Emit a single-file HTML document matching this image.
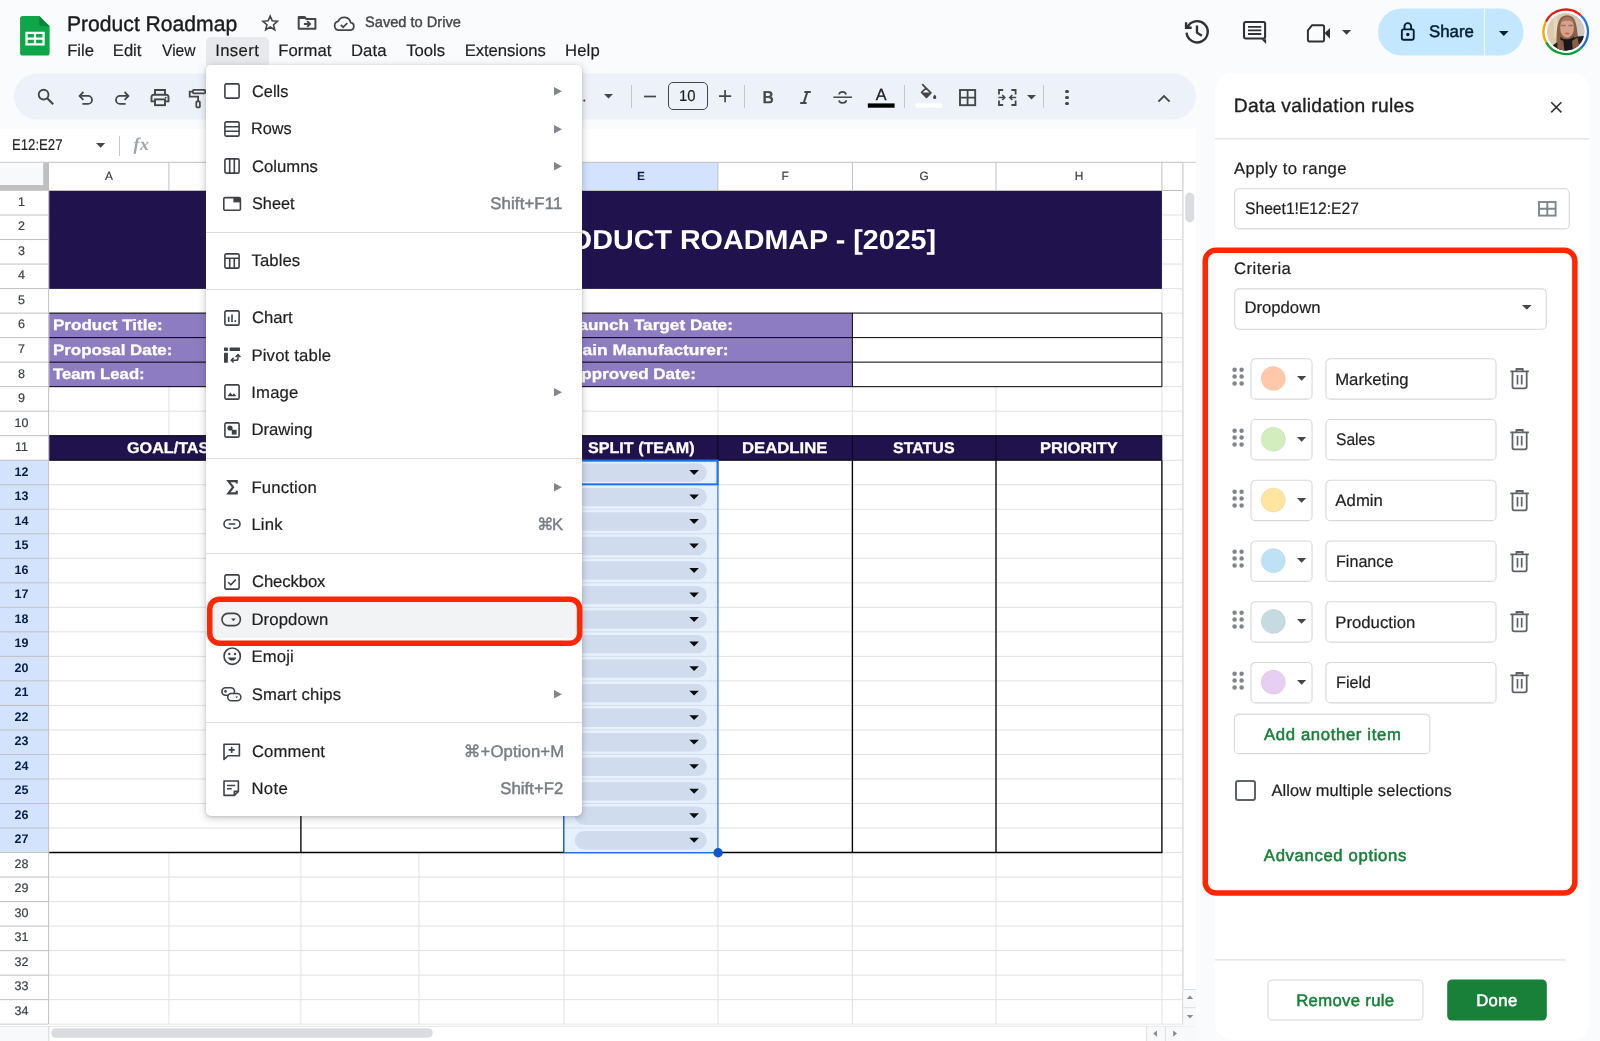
<!DOCTYPE html>
<html lang="en">
<head>
<meta charset="utf-8">
<title>Product Roadmap - Google Sheets</title>
<style>
*{margin:0;padding:0;box-sizing:content-box}
html,body{width:1600px;height:1041px;overflow:hidden;background:#f9fbfd}
body{position:relative;font-family:"Liberation Sans",sans-serif;text-rendering:geometricPrecision}
#app{position:absolute;left:0;top:0;width:1600px;height:1041px;overflow:hidden;will-change:transform}
#app div,#app span,#app svg{position:absolute;display:block}
#app svg{overflow:visible}
#app span{white-space:nowrap}
.ch{font-size:11.9px;line-height:14px;text-align:center;color:#3c4043;-webkit-text-stroke:.2px #3c4043}
.ch.sel{font-weight:700;color:#041e49;-webkit-text-stroke:0}
.rh{left:0;width:43px;font-size:12.5px;line-height:14px;text-align:center;color:#3c4043;-webkit-text-stroke:.2px #3c4043}
.rh.sel{font-weight:700;color:#041e49;-webkit-text-stroke:0}
</style>
</head>
<body>
<div id="app">
<!-- top bar -->
<svg style="left:20.3px;top:15.8px;" width="29.7" height="39.9" viewBox="0 0 30 40.5"><path d="M2.6 0H19.5L30 10.5V37.6a2.6 2.6 0 0 1-2.6 2.6H2.6A2.6 2.6 0 0 1 0 37.6V2.6A2.6 2.6 0 0 1 2.6 0Z" fill="#0da648"/><path d="M19.5 0L30 10.5H22.1a2.6 2.6 0 0 1-2.6-2.6Z" fill="#08863a"/><path d="M5.4 15.8H25v14H5.4Zm2.3 2.4v3.5h6.3v-3.5Zm8.6 0v3.5h6.4v-3.5Zm-8.6 5.8v3.4h6.3V24Zm8.6 0v3.4h6.4V24Z" fill="#fff" fill-rule="evenodd" transform="translate(0 .2)"/></svg>
<span style="left:66.77px;top:12px;font-size:21.3px;line-height:24px;color:#1b1b1b;transform-origin:0 0;transform:scaleX(0.9912);-webkit-text-stroke:0.4px #1b1b1b;">Product Roadmap</span>
<svg style="left:259.75px;top:12.5px;" width="20.4" height="20.4" viewBox="0 0 24 24"><path d="M12 3.6l2.4 5.6 6.1.55-4.6 4 1.4 5.95L12 16.5 6.7 19.7l1.4-5.95-4.6-4 6.1-.55Z" fill="none" stroke="#444746" stroke-width="1.9" stroke-linejoin="miter"/></svg>
<svg style="left:297px;top:15px;" width="20" height="15" viewBox="0 0 20 15"><path d="M1.7 13.7V1.9H7.5L9.3 4H18.4V13.7Z" fill="none" stroke="#444746" stroke-width="2" stroke-linejoin="round"/><path d="M1.7 1.9H7.5L9.3 4H1.7Z" fill="#444746"/><path d="M6.9 9h5.4M10.2 6.1l2.9 2.9-2.9 2.9" fill="none" stroke="#444746" stroke-width="1.9"/></svg>
<svg style="left:333.1px;top:12.7px;" width="22.2" height="20.3" viewBox="0 0 24 22"><path d="M6.5 18.6h12a4.1 4.1 0 0 0 .6-8.15A7.1 7.1 0 0 0 5.6 9.1a4.8 4.8 0 0 0 .9 9.5Z" fill="none" stroke="#444746" stroke-width="1.9" stroke-linejoin="round"/><path d="M8.4 12.9l2.5 2.5 4.6-4.6" fill="none" stroke="#444746" stroke-width="1.8"/></svg>
<span style="left:364.54px;top:14px;font-size:15px;line-height:17px;color:#444746;transform-origin:0 0;transform:scaleX(0.9744);-webkit-text-stroke:0.4px #444746;">Saved to Drive</span>
<div style="left:206px;top:36.5px;width:63px;height:28.5px;background:#e7e9ec;border-radius:5px 5px 0 0;"></div>
<span style="left:67.23px;top:41px;font-size:16.7px;line-height:19px;color:#1f1f1f;letter-spacing:-0.05px;-webkit-text-stroke:0.2px #1f1f1f;">File</span>
<span style="left:112.83px;top:41px;font-size:16.7px;line-height:19px;color:#1f1f1f;letter-spacing:-0.08px;-webkit-text-stroke:0.2px #1f1f1f;">Edit</span>
<span style="left:161.93px;top:41px;font-size:16.7px;line-height:19px;color:#1f1f1f;transform-origin:0 0;transform:scaleX(0.9360);-webkit-text-stroke:0.2px #1f1f1f;">View</span>
<span style="left:215.16px;top:41px;font-size:16.7px;line-height:19px;color:#1f1f1f;letter-spacing:0.39px;-webkit-text-stroke:0.2px #1f1f1f;">Insert</span>
<span style="left:278.33px;top:41px;font-size:16.7px;line-height:19px;color:#1f1f1f;letter-spacing:0.03px;-webkit-text-stroke:0.2px #1f1f1f;">Format</span>
<span style="left:350.93px;top:41px;font-size:16.7px;line-height:19px;color:#1f1f1f;letter-spacing:0.08px;-webkit-text-stroke:0.2px #1f1f1f;">Data</span>
<span style="left:406.22px;top:41px;font-size:16.7px;line-height:19px;color:#1f1f1f;letter-spacing:-0.05px;-webkit-text-stroke:0.2px #1f1f1f;">Tools</span>
<span style="left:464.63px;top:41px;font-size:16.7px;line-height:19px;color:#1f1f1f;letter-spacing:-0.05px;-webkit-text-stroke:0.2px #1f1f1f;">Extensions</span>
<span style="left:564.93px;top:41px;font-size:16.7px;line-height:19px;color:#1f1f1f;letter-spacing:0.16px;-webkit-text-stroke:0.2px #1f1f1f;">Help</span>
<svg style="left:1181.9px;top:17.9px;" width="28" height="28" viewBox="0 0 24 24"><path d="M4.6 8.2A9.1 9.1 0 1 1 3.9 12.6" fill="none" stroke="#303133" stroke-width="2.05"/><path d="M3.5 3.6V8.4H8.3" fill="none" stroke="#303133" stroke-width="2.05"/><path d="M12.85 6.5V12.6L17 15.3" fill="none" stroke="#303133" stroke-width="2.05"/></svg>
<svg style="left:1242px;top:20px;" width="26" height="25" viewBox="0 0 26 25"><rect x="2" y="2" width="21.1" height="16.5" rx="1.7" fill="none" stroke="#303133" stroke-width="2.1"/><path d="M19.4 19.2H24.15V23.9Z" fill="#303133"/><path d="M6 6.8H19.3M6 10.4H19.3M6 14H19.3" stroke="#303133" stroke-width="1.8"/></svg>
<svg style="left:1306px;top:22.9px;" width="25" height="20.6" viewBox="0 0 25 21"><path d="M6 2.2H16.6a1.6 1.6 0 0 1 1.6 1.6V17.2a1.6 1.6 0 0 1-1.6 1.6H3.3a1.6 1.6 0 0 1-1.6-1.6V7.5Z" fill="none" stroke="#303133" stroke-width="2" stroke-linejoin="round"/><path d="M18.6 10.5L24.2 5V16Z" fill="#303133"/></svg>
<svg style="left:1341.8px;top:29.75px;" width="9.2" height="4.7" viewBox="0 0 9.2 4.7"><path d="M0 0H9.2L4.6 4.7Z" fill="#3c4043"/></svg>
<svg style="left:1376px;top:6px;" width="151" height="53"><rect x="2" y="2.5" width="145.5" height="47" rx="23.5" fill="#c2e7ff"/></svg>
<div style="left:1483.6px;top:8.5px;width:1.4px;height:47px;background:#f9fbfd;"></div>
<svg style="left:1400.1px;top:20.7px;" width="15.6" height="20" viewBox="0 0 16 20.5"><rect x="1.9" y="8.6" width="12.2" height="10.6" rx="1.6" fill="none" stroke="#001d35" stroke-width="1.9"/><path d="M4.6 8.4V5.6a3.4 3.4 0 0 1 6.8 0V8.4" fill="none" stroke="#001d35" stroke-width="1.9"/><circle cx="8" cy="13.9" r="1.75" fill="#001d35"/></svg>
<span style="left:1428.94px;top:22px;font-size:16.8px;line-height:19px;color:#001d35;letter-spacing:0.03px;-webkit-text-stroke:0.5px #001d35;">Share</span>
<svg style="left:1498.8px;top:31px;" width="9.6" height="5" viewBox="0 0 9.6 5"><path d="M0 0H9.6L4.8 5Z" fill="#001d35"/></svg>
<svg style="left:1541px;top:7.25px;" width="50" height="50" viewBox="0 0 50 50"><defs><clipPath id="avc"><circle cx="24.75" cy="24.8" r="18.75"/></clipPath></defs><g fill="none" stroke-width="2.3"><path d="M4.93 14.7A22.25 22.25 0 0 1 39.64 8.27" stroke="#ea1c12"/><path d="M39.64 8.27A22.25 22.25 0 0 1 39.64 41.33" stroke="#1a6dea"/><path d="M39.64 41.33A22.25 22.25 0 0 1 5.2 35.42" stroke="#0f9d3a"/><path d="M5.2 35.42A22.25 22.25 0 0 1 4.93 14.7" stroke="#f6a800"/></g><circle cx="24.75" cy="24.8" r="20.6" fill="#fff"/><g clip-path="url(#avc)"><g transform="translate(5.85 5.9)"><rect width="38" height="38" fill="#dbcab0"/><rect x="25" y="0" width="13" height="26" fill="#cfc8c1"/><rect x="7" y="3" width="3.4" height="22" fill="#e6d7bd"/><path d="M10.2 38C9.2 24 9.4 10 13.8 5 17 1.3 23.6 1.3 26.6 5 30.6 10 30.2 21 33 38Z" fill="#8b5f45"/><path d="M4.5 33.5C8 30 12.5 28 16 27L26 25.5C29.5 23.8 33.5 23 37 23.2L38 38H4.5Z" fill="#222224"/><ellipse cx="20.2" cy="14.9" rx="6.9" ry="9.9" fill="#d7a28c"/><path d="M13.6 9.5C15 5.6 18 4 20.4 4 23 4 25.8 5.6 27 9.4 24.5 7.3 16.4 7.3 13.6 9.5Z" fill="#a9775c"/><path d="M14.2 12.6h4.6M21.6 12.6h4.6" stroke="#9b6f62" stroke-width="1.5"/><ellipse cx="20.3" cy="20.6" rx="2.7" ry="1" fill="#c0695f"/><path d="M13.6 23.6C15.4 27.6 25 27.6 27 23.2L27.6 38H13Z" fill="#18181b"/><path d="M10.4 25L16.4 28.2 17.6 38H10.6ZM25.2 28L30.6 24.6 33.2 36.6 26 38Z" fill="#8b5f45"/></g></g></svg>
<!-- toolbar -->
<svg style="left:12px;top:71px;" width="1188" height="52"><rect x="2" y="2.4" width="1182" height="46" rx="23" fill="#edf2fa"/></svg>
<svg style="left:36.5px;top:87.8px;" width="18" height="17.5" viewBox="0 0 18 17.5"><circle cx="6.6" cy="6.6" r="4.9" fill="none" stroke="#444746" stroke-width="1.9"/><path d="M10.2 10.2l6 6" stroke="#444746" stroke-width="2.1"/></svg>
<svg style="left:77.5px;top:91px;" width="16" height="14" viewBox="0 0 16 14"><path d="M1.6 4.9H10a4 4 0 0 1 0 8H4.4" fill="none" stroke="#444746" stroke-width="1.8"/><path d="M5.4 1L1.6 4.9l3.8 3.9" fill="none" stroke="#444746" stroke-width="1.8"/></svg>
<svg style="left:114.3px;top:91px;" width="16" height="14" viewBox="0 0 16 14"><path d="M14.4 4.9H6a4 4 0 0 0 0 8h5.6" fill="none" stroke="#444746" stroke-width="1.8"/><path d="M10.6 1l3.8 3.9-3.8 3.9" fill="none" stroke="#444746" stroke-width="1.8"/></svg>
<svg style="left:150.2px;top:88.6px;" width="20" height="17.2" viewBox="0 0 20 17.2"><path d="M5 5.6V1h10v4.6" fill="none" stroke="#444746" stroke-width="1.9"/><path d="M4.6 12.4H1.5V7.9a2.2 2.2 0 0 1 2.2-2.2h12.6a2.2 2.2 0 0 1 2.2 2.2v4.5h-3.1" fill="none" stroke="#444746" stroke-width="1.9"/><rect x="5" y="10.4" width="10" height="5.8" fill="none" stroke="#444746" stroke-width="1.9"/><circle cx="15.7" cy="8.6" r="0.95" fill="#444746"/></svg>
<svg style="left:187.6px;top:87.6px;" width="19" height="21" viewBox="0 0 19 21"><rect x="4.9" y="1.9" width="12.3" height="3.5" rx="0.9" fill="none" stroke="#444746" stroke-width="1.8"/><path d="M4.9 3.6H1.7V8.7H10.1V13" fill="none" stroke="#444746" stroke-width="1.8"/><rect x="8.3" y="13.4" width="3.6" height="6" rx="0.8" fill="none" stroke="#444746" stroke-width="1.7"/></svg>
<svg style="left:582px;top:98px;" width="5" height="5" viewBox="0 0 5 5"><circle cx="2.3" cy="2.6" r="1.15" fill="#444746"/></svg>
<svg style="left:604px;top:94.1px;" width="9" height="4.6" viewBox="0 0 9 4.6"><path d="M0 0H9L4.5 4.6Z" fill="#444746"/></svg>
<div style="left:630.9px;top:84.6px;width:1px;height:23px;background:#c7c7c7;"></div>
<div style="left:744.1px;top:84.6px;width:1px;height:23px;background:#c7c7c7;"></div>
<div style="left:904.1px;top:84.6px;width:1px;height:23px;background:#c7c7c7;"></div>
<div style="left:1043.1px;top:84.6px;width:1px;height:23px;background:#c7c7c7;"></div>
<svg style="left:643px;top:94px;" width="14" height="5" viewBox="0 0 14 5"><path d="M1 2.5H13" stroke="#444746" stroke-width="1.7"/></svg>
<div style="left:668.4px;top:82.4px;width:39.2px;height:27.2px;border:1px solid #444746;border-radius:5px;box-sizing:border-box;"></div>
<span style="left:679.47px;top:88px;font-size:15.6px;line-height:17px;color:#1f1f1f;transform-origin:0 0;transform:scaleX(0.9547);-webkit-text-stroke:0.2px #1f1f1f;">10</span>
<svg style="left:718px;top:89.4px;" width="14.2" height="14.2" viewBox="0 0 14.2 14.2"><path d="M1 7.1H13.2M7.1 1V13.2" stroke="#444746" stroke-width="1.7"/></svg>
<span style="left:762.62px;top:88px;font-size:16.8px;line-height:19px;color:#444746;-webkit-text-stroke:0.7px #444746;">B</span>
<svg style="left:798.6px;top:90.6px;" width="13" height="13" viewBox="0 0 13 13"><path d="M5.4 1.1h6.4M1.2 11.9h6.4M8.3 1.1L4.7 11.9" stroke="#444746" stroke-width="2"/></svg>
<svg style="left:832.6px;top:89.6px;" width="19.4" height="15" viewBox="0 0 19.4 15"><path d="M0.4 7.2h18.6" stroke="#444746" stroke-width="1.5"/><path d="M13.1 4.4C12.6 2.7 11.3 1.9 9.6 1.9 7.7 1.9 6.2 2.9 6.2 4.5M6 10.4c.5 1.7 1.9 2.5 3.7 2.5 2 0 3.5-1 3.5-2.6" fill="none" stroke="#444746" stroke-width="1.8"/></svg>
<span style="left:875.87px;top:86px;font-size:16.2px;line-height:18px;color:#1f1f1f;-webkit-text-stroke:0.3px #1f1f1f;">A</span>
<svg style="left:865px;top:101px;" width="32" height="10"><rect x="2.8" y="2.4" width="26.8" height="4.3" rx="0" fill="#000"/></svg>
<svg style="left:919.6px;top:84.2px;" width="17.4" height="16.4" viewBox="0 0 17.4 16.4"><path d="M2.6 0.6L10.9 8.9 6.5 13.3 1.6 8.4 6 4Z" fill="none" stroke="#444746" stroke-width="1.7" stroke-linejoin="round"/><path d="M1.9 8.6H10.7L6.4 12.9Z" fill="#444746"/><path d="M14.7 10.6c.9 1.2 1.6 2.1 1.6 2.9a1.6 1.6 0 0 1-3.2 0c0-.8.7-1.7 1.6-2.9Z" fill="#444746"/></svg>
<svg style="left:913px;top:101px;" width="32" height="10"><rect x="2.4" y="2.3" width="26.8" height="4.4" rx="0" fill="#fff"/></svg>
<svg style="left:959.4px;top:88.8px;" width="17.2" height="17.2" viewBox="0 0 17.2 17.2"><rect x="1" y="1" width="15.2" height="15.2" fill="none" stroke="#444746" stroke-width="1.9"/><path d="M8.6 1v15.2M1 8.6h15.2" stroke="#444746" stroke-width="1.8"/></svg>
<svg style="left:997.8px;top:88.6px;" width="18.6" height="17" viewBox="0 0 18.6 17"><path d="M5.2 1H1V5.4M13.4 1h4.2V5.4M5.2 16H1V11.6M13.4 16h4.2V11.6" fill="none" stroke="#444746" stroke-width="1.8"/><path d="M0.4 8.5H6.6M4.3 6l2.5 2.5L4.3 11M18.2 8.5H12M14.3 6l-2.5 2.5 2.5 2.5" fill="none" stroke="#444746" stroke-width="1.6"/></svg>
<svg style="left:1026.9px;top:94.7px;" width="9" height="4.6" viewBox="0 0 9 4.6"><path d="M0 0H9L4.5 4.6Z" fill="#444746"/></svg>
<div style="left:1065.4px;top:90.3px;width:3.2px;height:3.2px;background:#444746;border-radius:50%;"></div>
<div style="left:1065.4px;top:95.9px;width:3.2px;height:3.2px;background:#444746;border-radius:50%;"></div>
<div style="left:1065.4px;top:101.5px;width:3.2px;height:3.2px;background:#444746;border-radius:50%;"></div>
<svg style="left:1157px;top:93.6px;" width="14" height="9" viewBox="0 0 14 9"><path d="M1.4 7.6L7 2l5.6 5.6" fill="none" stroke="#444746" stroke-width="1.9"/></svg>
<!-- formula bar -->
<div style="left:0px;top:128.8px;width:1196px;height:34px;background:#fff;"></div>
<span style="left:11.92px;top:137px;font-size:15.6px;line-height:17px;color:#1f1f1f;transform-origin:0 0;transform:scaleX(0.8437);-webkit-text-stroke:0.2px #1f1f1f;">E12:E27</span>
<svg style="left:95.8px;top:142.8px;" width="9.2" height="4.8" viewBox="0 0 9.2 4.8"><path d="M0 0H9.2L4.6 4.8Z" fill="#444746"/></svg>
<div style="left:119.2px;top:136.4px;width:1px;height:19.2px;background:#c7c7c7;"></div>
<span style="left:133.4px;top:134px;font-family:'Liberation Serif',serif;font-style:italic;font-weight:700;font-size:17.8px;line-height:20px;color:#a0a4a8;letter-spacing:0.6px;">fx</span>
<!-- sheet grid -->
<svg style="left:0;top:0" width="1196" height="1041" viewBox="0 0 1196 1041"><rect x="0" y="162" width="1196" height="879" fill="#fff"/><path d="M49.2 215.02H1182.9" stroke="#e1e1e1" stroke-width="1"/><path d="M49.2 239.54H1182.9" stroke="#e1e1e1" stroke-width="1"/><path d="M49.2 264.06H1182.9" stroke="#e1e1e1" stroke-width="1"/><path d="M49.2 288.58H1182.9" stroke="#e1e1e1" stroke-width="1"/><path d="M49.2 313.1H1182.9" stroke="#e1e1e1" stroke-width="1"/><path d="M49.2 337.62H1182.9" stroke="#e1e1e1" stroke-width="1"/><path d="M49.2 362.14H1182.9" stroke="#e1e1e1" stroke-width="1"/><path d="M49.2 386.66H1182.9" stroke="#e1e1e1" stroke-width="1"/><path d="M49.2 411.18H1182.9" stroke="#e1e1e1" stroke-width="1"/><path d="M49.2 435.7H1182.9" stroke="#e1e1e1" stroke-width="1"/><path d="M49.2 460.22H1182.9" stroke="#e1e1e1" stroke-width="1"/><path d="M49.2 484.74H1182.9" stroke="#e1e1e1" stroke-width="1"/><path d="M49.2 509.26H1182.9" stroke="#e1e1e1" stroke-width="1"/><path d="M49.2 533.78H1182.9" stroke="#e1e1e1" stroke-width="1"/><path d="M49.2 558.3H1182.9" stroke="#e1e1e1" stroke-width="1"/><path d="M49.2 582.82H1182.9" stroke="#e1e1e1" stroke-width="1"/><path d="M49.2 607.34H1182.9" stroke="#e1e1e1" stroke-width="1"/><path d="M49.2 631.86H1182.9" stroke="#e1e1e1" stroke-width="1"/><path d="M49.2 656.38H1182.9" stroke="#e1e1e1" stroke-width="1"/><path d="M49.2 680.9H1182.9" stroke="#e1e1e1" stroke-width="1"/><path d="M49.2 705.42H1182.9" stroke="#e1e1e1" stroke-width="1"/><path d="M49.2 729.94H1182.9" stroke="#e1e1e1" stroke-width="1"/><path d="M49.2 754.46H1182.9" stroke="#e1e1e1" stroke-width="1"/><path d="M49.2 778.98H1182.9" stroke="#e1e1e1" stroke-width="1"/><path d="M49.2 803.5H1182.9" stroke="#e1e1e1" stroke-width="1"/><path d="M49.2 828.02H1182.9" stroke="#e1e1e1" stroke-width="1"/><path d="M49.2 852.54H1182.9" stroke="#e1e1e1" stroke-width="1"/><path d="M49.2 877.06H1182.9" stroke="#e1e1e1" stroke-width="1"/><path d="M49.2 901.58H1182.9" stroke="#e1e1e1" stroke-width="1"/><path d="M49.2 926.1H1182.9" stroke="#e1e1e1" stroke-width="1"/><path d="M49.2 950.62H1182.9" stroke="#e1e1e1" stroke-width="1"/><path d="M49.2 975.14H1182.9" stroke="#e1e1e1" stroke-width="1"/><path d="M49.2 999.66H1182.9" stroke="#e1e1e1" stroke-width="1"/><path d="M49.2 1024.18H1182.9" stroke="#e1e1e1" stroke-width="1"/><path d="M168.9 386.66V435.7" stroke="#e1e1e1" stroke-width="1"/><path d="M168.9 852.54V1024.18" stroke="#e1e1e1" stroke-width="1"/><path d="M300.9 386.66V435.7" stroke="#e1e1e1" stroke-width="1"/><path d="M300.9 852.54V1024.18" stroke="#e1e1e1" stroke-width="1"/><path d="M419 386.66V435.7" stroke="#e1e1e1" stroke-width="1"/><path d="M419 852.54V1024.18" stroke="#e1e1e1" stroke-width="1"/><path d="M564 386.66V435.7" stroke="#e1e1e1" stroke-width="1"/><path d="M564 852.54V1024.18" stroke="#e1e1e1" stroke-width="1"/><path d="M717.9 386.66V435.7" stroke="#e1e1e1" stroke-width="1"/><path d="M717.9 852.54V1024.18" stroke="#e1e1e1" stroke-width="1"/><path d="M852.4 386.66V435.7" stroke="#e1e1e1" stroke-width="1"/><path d="M852.4 852.54V1024.18" stroke="#e1e1e1" stroke-width="1"/><path d="M996 386.66V435.7" stroke="#e1e1e1" stroke-width="1"/><path d="M996 852.54V1024.18" stroke="#e1e1e1" stroke-width="1"/><path d="M1161.9 386.66V435.7" stroke="#e1e1e1" stroke-width="1"/><path d="M1161.9 852.54V1024.18" stroke="#e1e1e1" stroke-width="1"/><path d="M717.9 460.22V852.54" stroke="#e1e1e1" stroke-width="1"/><path d="M1161.9 288.58V313.1" stroke="#e1e1e1" stroke-width="1"/><path d="M1182.9 190.5V1024.18" stroke="#e1e1e1" stroke-width="1"/><path d="M1161.9 190.5V288.58" stroke="#e1e1e1" stroke-width="1"/><rect x="49.2" y="190.5" width="1112.7" height="98.38" fill="#20124d"/><rect x="49.2" y="313.1" width="803.2" height="73.56" fill="#8e7cc3"/><rect x="852.4" y="313.1" width="309.5" height="73.56" fill="#fff"/><rect x="49.2" y="435.7" width="1112.7" height="24.52" fill="#20124d"/><path d="M49.2 313.1H1161.9" stroke="#000" stroke-width="1"/><path d="M49.2 337.62H1161.9" stroke="#000" stroke-width="1"/><path d="M49.2 362.14H1161.9" stroke="#000" stroke-width="1"/><path d="M49.2 386.66H1161.9" stroke="#000" stroke-width="1"/><path d="M852.4 313.1V386.66" stroke="#000" stroke-width="1"/><path d="M1161.9 313.1V386.66" stroke="#000" stroke-width="1"/><path d="M49.2 435.7H1161.9" stroke="#000" stroke-width="1"/><path d="M49.2 460.22H1161.9" stroke="#000" stroke-width="1"/><path d="M300.9 435.7V460.22" stroke="#000" stroke-width="1" opacity=".75"/><path d="M564 435.7V460.22" stroke="#000" stroke-width="1" opacity=".75"/><path d="M717.9 435.7V460.22" stroke="#000" stroke-width="1" opacity=".75"/><path d="M852.4 435.7V460.22" stroke="#000" stroke-width="1" opacity=".75"/><path d="M996 435.7V460.22" stroke="#000" stroke-width="1" opacity=".75"/><path d="M1161.9 435.7V460.22" stroke="#000" stroke-width="1" opacity=".75"/><path d="M300.9 460.22V852.54" stroke="#000" stroke-width="1.35"/><path d="M564 460.22V852.54" stroke="#000" stroke-width="1.35"/><path d="M852.4 460.22V852.54" stroke="#000" stroke-width="1.35"/><path d="M996 460.22V852.54" stroke="#000" stroke-width="1.35"/><path d="M1161.9 460.22V852.54" stroke="#000" stroke-width="1.35"/><path d="M49.2 852.54H1162.4" stroke="#000" stroke-width="1.35"/><rect x="564" y="460.22" width="153.9" height="392.32" fill="#e7f0fd"/><path d="M564 484.74H717.9" stroke="#d3dcec" stroke-width="1"/><path d="M564 509.26H717.9" stroke="#d3dcec" stroke-width="1"/><path d="M564 533.78H717.9" stroke="#d3dcec" stroke-width="1"/><path d="M564 558.3H717.9" stroke="#d3dcec" stroke-width="1"/><path d="M564 582.82H717.9" stroke="#d3dcec" stroke-width="1"/><path d="M564 607.34H717.9" stroke="#d3dcec" stroke-width="1"/><path d="M564 631.86H717.9" stroke="#d3dcec" stroke-width="1"/><path d="M564 656.38H717.9" stroke="#d3dcec" stroke-width="1"/><path d="M564 680.9H717.9" stroke="#d3dcec" stroke-width="1"/><path d="M564 705.42H717.9" stroke="#d3dcec" stroke-width="1"/><path d="M564 729.94H717.9" stroke="#d3dcec" stroke-width="1"/><path d="M564 754.46H717.9" stroke="#d3dcec" stroke-width="1"/><path d="M564 778.98H717.9" stroke="#d3dcec" stroke-width="1"/><path d="M564 803.5H717.9" stroke="#d3dcec" stroke-width="1"/><path d="M564 828.02H717.9" stroke="#d3dcec" stroke-width="1"/><rect x="574.8" y="463.28" width="132" height="18.4" rx="9.2" fill="#d0dcee"/><path d="M689.3 469.98h9.6l-4.8 4.9Z" fill="#0a0a0a"/><rect x="574.8" y="487.8" width="132" height="18.4" rx="9.2" fill="#d0dcee"/><path d="M689.3 494.5h9.6l-4.8 4.9Z" fill="#0a0a0a"/><rect x="574.8" y="512.32" width="132" height="18.4" rx="9.2" fill="#d0dcee"/><path d="M689.3 519.02h9.6l-4.8 4.9Z" fill="#0a0a0a"/><rect x="574.8" y="536.84" width="132" height="18.4" rx="9.2" fill="#d0dcee"/><path d="M689.3 543.54h9.6l-4.8 4.9Z" fill="#0a0a0a"/><rect x="574.8" y="561.36" width="132" height="18.4" rx="9.2" fill="#d0dcee"/><path d="M689.3 568.06h9.6l-4.8 4.9Z" fill="#0a0a0a"/><rect x="574.8" y="585.88" width="132" height="18.4" rx="9.2" fill="#d0dcee"/><path d="M689.3 592.58h9.6l-4.8 4.9Z" fill="#0a0a0a"/><rect x="574.8" y="610.4" width="132" height="18.4" rx="9.2" fill="#d0dcee"/><path d="M689.3 617.1h9.6l-4.8 4.9Z" fill="#0a0a0a"/><rect x="574.8" y="634.92" width="132" height="18.4" rx="9.2" fill="#d0dcee"/><path d="M689.3 641.62h9.6l-4.8 4.9Z" fill="#0a0a0a"/><rect x="574.8" y="659.44" width="132" height="18.4" rx="9.2" fill="#d0dcee"/><path d="M689.3 666.14h9.6l-4.8 4.9Z" fill="#0a0a0a"/><rect x="574.8" y="683.96" width="132" height="18.4" rx="9.2" fill="#d0dcee"/><path d="M689.3 690.66h9.6l-4.8 4.9Z" fill="#0a0a0a"/><rect x="574.8" y="708.48" width="132" height="18.4" rx="9.2" fill="#d0dcee"/><path d="M689.3 715.18h9.6l-4.8 4.9Z" fill="#0a0a0a"/><rect x="574.8" y="733" width="132" height="18.4" rx="9.2" fill="#d0dcee"/><path d="M689.3 739.7h9.6l-4.8 4.9Z" fill="#0a0a0a"/><rect x="574.8" y="757.52" width="132" height="18.4" rx="9.2" fill="#d0dcee"/><path d="M689.3 764.22h9.6l-4.8 4.9Z" fill="#0a0a0a"/><rect x="574.8" y="782.04" width="132" height="18.4" rx="9.2" fill="#d0dcee"/><path d="M689.3 788.74h9.6l-4.8 4.9Z" fill="#0a0a0a"/><rect x="574.8" y="806.56" width="132" height="18.4" rx="9.2" fill="#d0dcee"/><path d="M689.3 813.26h9.6l-4.8 4.9Z" fill="#0a0a0a"/><rect x="574.8" y="831.08" width="132" height="18.4" rx="9.2" fill="#d0dcee"/><path d="M689.3 837.78h9.6l-4.8 4.9Z" fill="#0a0a0a"/><rect x="564" y="460.22" width="153.9" height="392.32" fill="none" stroke="#1a73e8" stroke-width="1.1"/><rect x="564.4" y="460.72" width="153.1" height="23.62" fill="none" stroke="#1a73e8" stroke-width="2"/><circle cx="718.1" cy="852.74" r="4.7" fill="#0b57d0"/><rect x="0" y="162" width="1196" height="28.5" fill="#fff"/><rect x="564" y="162.5" width="153.9" height="28" fill="#d3e3fd"/><path d="M0 162.3H1196" stroke="#c0c0c0" stroke-width="1"/><path d="M49.2 190.5H1182.9" stroke="#c0c0c0" stroke-width="1"/><path d="M168.9 162.5V190.5" stroke="#c0c0c0" stroke-width="1"/><path d="M300.9 162.5V190.5" stroke="#c0c0c0" stroke-width="1"/><path d="M419 162.5V190.5" stroke="#c0c0c0" stroke-width="1"/><path d="M564 162.5V190.5" stroke="#c0c0c0" stroke-width="1"/><path d="M717.9 162.5V190.5" stroke="#c0c0c0" stroke-width="1"/><path d="M852.4 162.5V190.5" stroke="#c0c0c0" stroke-width="1"/><path d="M996 162.5V190.5" stroke="#c0c0c0" stroke-width="1"/><path d="M1161.9 162.5V190.5" stroke="#c0c0c0" stroke-width="1"/><path d="M1182.9 162.5V190.5" stroke="#c0c0c0" stroke-width="1"/><rect x="0" y="162.8" width="49" height="28.1" fill="#c0c0c0"/><rect x="0" y="162.8" width="43.2" height="22.2" fill="#f8f9fa"/><rect x="0" y="190.9" width="48.2" height="833.68" fill="#fff"/><rect x="0" y="460.22" width="48.2" height="392.32" fill="#d3e3fd"/><path d="M0 215.02H48.6" stroke="#c0c0c0" stroke-width="1"/><path d="M0 239.54H48.6" stroke="#c0c0c0" stroke-width="1"/><path d="M0 264.06H48.6" stroke="#c0c0c0" stroke-width="1"/><path d="M0 288.58H48.6" stroke="#c0c0c0" stroke-width="1"/><path d="M0 313.1H48.6" stroke="#c0c0c0" stroke-width="1"/><path d="M0 337.62H48.6" stroke="#c0c0c0" stroke-width="1"/><path d="M0 362.14H48.6" stroke="#c0c0c0" stroke-width="1"/><path d="M0 386.66H48.6" stroke="#c0c0c0" stroke-width="1"/><path d="M0 411.18H48.6" stroke="#c0c0c0" stroke-width="1"/><path d="M0 435.7H48.6" stroke="#c0c0c0" stroke-width="1"/><path d="M0 460.22H48.6" stroke="#c0c0c0" stroke-width="1"/><path d="M0 484.74H48.6" stroke="#c0c0c0" stroke-width="1"/><path d="M0 509.26H48.6" stroke="#c0c0c0" stroke-width="1"/><path d="M0 533.78H48.6" stroke="#c0c0c0" stroke-width="1"/><path d="M0 558.3H48.6" stroke="#c0c0c0" stroke-width="1"/><path d="M0 582.82H48.6" stroke="#c0c0c0" stroke-width="1"/><path d="M0 607.34H48.6" stroke="#c0c0c0" stroke-width="1"/><path d="M0 631.86H48.6" stroke="#c0c0c0" stroke-width="1"/><path d="M0 656.38H48.6" stroke="#c0c0c0" stroke-width="1"/><path d="M0 680.9H48.6" stroke="#c0c0c0" stroke-width="1"/><path d="M0 705.42H48.6" stroke="#c0c0c0" stroke-width="1"/><path d="M0 729.94H48.6" stroke="#c0c0c0" stroke-width="1"/><path d="M0 754.46H48.6" stroke="#c0c0c0" stroke-width="1"/><path d="M0 778.98H48.6" stroke="#c0c0c0" stroke-width="1"/><path d="M0 803.5H48.6" stroke="#c0c0c0" stroke-width="1"/><path d="M0 828.02H48.6" stroke="#c0c0c0" stroke-width="1"/><path d="M0 852.54H48.6" stroke="#c0c0c0" stroke-width="1"/><path d="M0 877.06H48.6" stroke="#c0c0c0" stroke-width="1"/><path d="M0 901.58H48.6" stroke="#c0c0c0" stroke-width="1"/><path d="M0 926.1H48.6" stroke="#c0c0c0" stroke-width="1"/><path d="M0 950.62H48.6" stroke="#c0c0c0" stroke-width="1"/><path d="M0 975.14H48.6" stroke="#c0c0c0" stroke-width="1"/><path d="M0 999.66H48.6" stroke="#c0c0c0" stroke-width="1"/><path d="M0 1024.18H48.6" stroke="#c0c0c0" stroke-width="1"/><path d="M48.6 190.5V1024.18" stroke="#c0c0c0" stroke-width="1"/><rect x="1183.4" y="162.8" width="12.6" height="878.2" fill="#fff"/><path d="M1182.9 162.5V1041" stroke="#d9d9d9" stroke-width="1.2"/><rect x="1185.2" y="192.6" width="9" height="29.6" rx="4.5" fill="#dadce0"/><rect x="0" y="1024.78" width="1196" height="16.82" fill="#fff"/><path d="M0 1026.38H1196" stroke="#e6e6e6" stroke-width="1"/><rect x="0" y="1026.88" width="49" height="16" fill="#f8f9fa"/><rect x="1183.4" y="1026.88" width="13" height="16" fill="#f8f9fa"/><path d="M48.8 1026.18V1041" stroke="#d9d9d9" stroke-width="1"/><rect x="51.2" y="1028.2" width="381.6" height="9.6" rx="4.8" fill="#dadce0"/><rect x="1183.4" y="989.5" width="12.6" height="37" fill="#f8f9fa"/><path d="M1183.4 989.5H1196M1183.4 1007.6H1196" stroke="#e0e0e0" stroke-width="1"/><path d="M1186.8 999.1h6.4l-3.2-3.6Z" fill="#8a8a8a"/><path d="M1186.8 1015h6.4l-3.2 3.6Z" fill="#8a8a8a"/><rect x="1146.6" y="1026.88" width="36.2" height="16" fill="#f8f9fa"/><path d="M1146.6 1026.5V1041M1165.4 1026.5V1041" stroke="#e0e0e0" stroke-width="1"/><path d="M1157 1030.4v6.4l-3.8-3.2Z" fill="#8a8a8a"/><path d="M1173.2 1030.4v6.4l3.8-3.2Z" fill="#8a8a8a"/></svg>
<span class="ch" style="left:89.05px;top:169px;width:40px;">A</span>
<span class="ch" style="left:214.9px;top:169px;width:40px;">B</span>
<span class="ch" style="left:339.95px;top:169px;width:40px;">C</span>
<span class="ch" style="left:471.5px;top:169px;width:40px;">D</span>
<span class="ch sel" style="left:620.95px;top:169px;width:40px;">E</span>
<span class="ch" style="left:765.15px;top:169px;width:40px;">F</span>
<span class="ch" style="left:904.2px;top:169px;width:40px;">G</span>
<span class="ch" style="left:1058.95px;top:169px;width:40px;">H</span>
<span class="rh" style="top:195px;">1</span>
<span class="rh" style="top:219px;">2</span>
<span class="rh" style="top:244px;">3</span>
<span class="rh" style="top:268px;">4</span>
<span class="rh" style="top:293px;">5</span>
<span class="rh" style="top:317px;">6</span>
<span class="rh" style="top:342px;">7</span>
<span class="rh" style="top:367px;">8</span>
<span class="rh" style="top:391px;">9</span>
<span class="rh" style="top:416px;">10</span>
<span class="rh" style="top:440px;">11</span>
<span class="rh sel" style="top:465px;">12</span>
<span class="rh sel" style="top:489px;">13</span>
<span class="rh sel" style="top:514px;">14</span>
<span class="rh sel" style="top:538px;">15</span>
<span class="rh sel" style="top:563px;">16</span>
<span class="rh sel" style="top:587px;">17</span>
<span class="rh sel" style="top:612px;">18</span>
<span class="rh sel" style="top:636px;">19</span>
<span class="rh sel" style="top:661px;">20</span>
<span class="rh sel" style="top:685px;">21</span>
<span class="rh sel" style="top:710px;">22</span>
<span class="rh sel" style="top:734px;">23</span>
<span class="rh sel" style="top:759px;">24</span>
<span class="rh sel" style="top:783px;">25</span>
<span class="rh sel" style="top:808px;">26</span>
<span class="rh sel" style="top:832px;">27</span>
<span class="rh" style="top:857px;">28</span>
<span class="rh" style="top:881px;">29</span>
<span class="rh" style="top:906px;">30</span>
<span class="rh" style="top:930px;">31</span>
<span class="rh" style="top:955px;">32</span>
<span class="rh" style="top:979px;">33</span>
<span class="rh" style="top:1004px;">34</span>
<span style="left:529.66px;top:224px;font-size:27.4px;line-height:31px;color:#fff;transform-origin:0 0;transform:scaleX(1.0479);font-weight:700;">PRODUCT ROADMAP - [2025]</span>
<span style="left:53.16px;top:317px;font-size:15.1px;line-height:17px;color:#fff;transform-origin:0 0;transform:scaleX(1.1297);font-weight:700;-webkit-text-stroke:0.3px #fff;">Product Title:</span>
<span style="left:53.17px;top:342px;font-size:15.1px;line-height:17px;color:#fff;transform-origin:0 0;transform:scaleX(1.1206);font-weight:700;-webkit-text-stroke:0.3px #fff;">Proposal Date:</span>
<span style="left:52.71px;top:366px;font-size:15.1px;line-height:17px;color:#fff;transform-origin:0 0;transform:scaleX(1.1077);font-weight:700;-webkit-text-stroke:0.3px #fff;">Team Lead:</span>
<span style="left:567.67px;top:317px;font-size:15.1px;line-height:17px;color:#fff;transform-origin:0 0;transform:scaleX(1.1387);font-weight:700;-webkit-text-stroke:0.3px #fff;">Launch Target Date:</span>
<span style="left:568.14px;top:342px;font-size:15.1px;line-height:17px;color:#fff;transform-origin:0 0;transform:scaleX(1.1531);font-weight:700;-webkit-text-stroke:0.3px #fff;">Main Manufacturer:</span>
<span style="left:568.56px;top:366px;font-size:15.1px;line-height:17px;color:#fff;transform-origin:0 0;transform:scaleX(1.1291);font-weight:700;-webkit-text-stroke:0.3px #fff;">Approved Date:</span>
<span style="left:127.44px;top:440px;font-size:15.5px;line-height:17px;color:#fff;transform-origin:0 0;transform:scaleX(1.0426);font-weight:700;-webkit-text-stroke:0.3px #fff;">GOAL/TASK</span>
<span style="left:587.54px;top:440px;font-size:15.5px;line-height:17px;color:#fff;transform-origin:0 0;transform:scaleX(1.0396);font-weight:700;-webkit-text-stroke:0.3px #fff;">SPLIT (TEAM)</span>
<span style="left:742.48px;top:440px;font-size:15.5px;line-height:17px;color:#fff;transform-origin:0 0;transform:scaleX(1.0782);font-weight:700;-webkit-text-stroke:0.3px #fff;">DEADLINE</span>
<span style="left:893.14px;top:440px;font-size:15.5px;line-height:17px;color:#fff;transform-origin:0 0;transform:scaleX(1.0312);font-weight:700;-webkit-text-stroke:0.3px #fff;">STATUS</span>
<span style="left:1039.9px;top:440px;font-size:15.5px;line-height:17px;color:#fff;transform-origin:0 0;transform:scaleX(1.0631);font-weight:700;-webkit-text-stroke:0.3px #fff;">PRIORITY</span>
<!-- insert menu -->
<div style="left:206.2px;top:64.5px;width:375.8px;height:751.4px;background:#fff;border-radius:5px;box-shadow:0 2px 7px 2px rgba(60,64,67,.16),0 1px 3px rgba(60,64,67,.22);"></div>
<div style="left:206.2px;top:231.9px;width:375.8px;height:1px;background:#dadce0;"></div>
<div style="left:206.2px;top:288.7px;width:375.8px;height:1px;background:#dadce0;"></div>
<div style="left:206.2px;top:457.7px;width:375.8px;height:1px;background:#dadce0;"></div>
<div style="left:206.2px;top:552.9px;width:375.8px;height:1px;background:#dadce0;"></div>
<div style="left:206.2px;top:722.3px;width:375.8px;height:1px;background:#dadce0;"></div>
<svg style="left:204px;top:598px;" width="381" height="43"><rect x="2.2" y="2.6" width="375.8" height="37.3" rx="0" fill="#f1f3f4"/></svg>
<svg style="left:224px;top:83.3px;" width="16" height="16" viewBox="0 0 16 16"><rect x="0.9" y="0.9" width="14.2" height="14.2" rx="1.4" fill="none" stroke="#3f4245" stroke-width="1.6"/></svg>
<span style="left:251.97px;top:82px;font-size:16.7px;line-height:19px;color:#1f1f1f;transform-origin:0 0;transform:scaleX(0.9799);-webkit-text-stroke:0.2px #1f1f1f;">Cells</span>
<svg style="left:554.4px;top:87.1px;" width="8" height="8.6" viewBox="0 0 8 8.6"><path d="M0 0L8 4.3L0 8.6Z" fill="#80868b"/></svg>
<svg style="left:224px;top:120.7px;" width="16" height="16" viewBox="0 0 16 16"><rect x="0.9" y="0.9" width="14.2" height="14.2" rx="1.4" fill="none" stroke="#3f4245" stroke-width="1.6"/><path d="M1 5.7H15M1 10.3H15" fill="none" stroke="#3f4245" stroke-width="1.6"/></svg>
<span style="left:251.46px;top:119px;font-size:16.7px;line-height:19px;color:#1f1f1f;transform-origin:0 0;transform:scaleX(0.9765);-webkit-text-stroke:0.2px #1f1f1f;">Rows</span>
<svg style="left:554.4px;top:124.5px;" width="8" height="8.6" viewBox="0 0 8 8.6"><path d="M0 0L8 4.3L0 8.6Z" fill="#80868b"/></svg>
<svg style="left:224px;top:158.1px;" width="16" height="16" viewBox="0 0 16 16"><rect x="0.9" y="0.9" width="14.2" height="14.2" rx="1.4" fill="none" stroke="#3f4245" stroke-width="1.6"/><path d="M5.7 1V15M10.3 1V15" fill="none" stroke="#3f4245" stroke-width="1.6"/></svg>
<span style="left:251.95px;top:157px;font-size:16.7px;line-height:19px;color:#1f1f1f;-webkit-text-stroke:0.2px #1f1f1f;">Columns</span>
<svg style="left:554.4px;top:161.9px;" width="8" height="8.6" viewBox="0 0 8 8.6"><path d="M0 0L8 4.3L0 8.6Z" fill="#80868b"/></svg>
<svg style="left:224px;top:195.5px;" width="16" height="16" viewBox="0 0 16 16"><rect x="-0.2" y="1.6" width="16.6" height="12.6" rx="1.3" fill="none" stroke="#3f4245" stroke-width="1.6"/><rect x="9.4" y="1.8" width="6.8" height="4.6" fill="#3f4245"/></svg>
<span style="left:252.06px;top:194px;font-size:16.7px;line-height:19px;color:#1f1f1f;transform-origin:0 0;transform:scaleX(0.9764);-webkit-text-stroke:0.2px #1f1f1f;">Sheet</span>
<span style="left:490.24px;top:194px;font-size:16.7px;line-height:19px;color:#787d84;letter-spacing:0.16px;-webkit-text-stroke:0.5px #787d84;">Shift+F11</span>
<svg style="left:224px;top:252.8px;" width="16" height="16" viewBox="0 0 16 16"><rect x="0.9" y="0.9" width="14.2" height="14.2" rx="1.4" fill="none" stroke="#3f4245" stroke-width="1.6"/><path d="M1 5.2H15M5.7 5.2V15M10.3 5.2V15" fill="none" stroke="#3f4245" stroke-width="1.6"/></svg>
<span style="left:251.62px;top:251px;font-size:16.7px;line-height:19px;color:#1f1f1f;letter-spacing:0.04px;-webkit-text-stroke:0.2px #1f1f1f;">Tables</span>
<svg style="left:224px;top:309.6px;" width="16" height="16" viewBox="0 0 16 16"><rect x="0.9" y="0.9" width="14.2" height="14.2" rx="1.4" fill="none" stroke="#3f4245" stroke-width="1.6"/><path d="M4.7 6.8V12M8 4.4V12" fill="none" stroke="#3f4245" stroke-width="1.6"/><path d="M11.3 10.2V12" fill="none" stroke="#3f4245" stroke-width="1.6"/></svg>
<span style="left:251.95px;top:308px;font-size:16.7px;line-height:19px;color:#1f1f1f;letter-spacing:-0.03px;-webkit-text-stroke:0.2px #1f1f1f;">Chart</span>
<svg style="left:224px;top:347px;" width="16" height="16" viewBox="0 0 16 16"><rect x="0" y="0.4" width="3.9" height="3.6" rx="0.4" fill="#3f4245"/><rect x="5.6" y="0.4" width="10.4" height="3.6" rx="0.6" fill="#3f4245"/><rect x="0" y="5.8" width="3.9" height="10" rx="0.6" fill="#3f4245"/><path d="M7.6 13.2H12.2a1.8 1.8 0 0 0 1.8-1.8V8" fill="none" stroke="#3f4245" stroke-width="1.5"/><path d="M11.6 10L14 7.6l2.4 2.4M9.6 10.9L7.3 13.2l2.3 2.3" fill="none" stroke="#3f4245" stroke-width="1.5"/></svg>
<span style="left:251.43px;top:346px;font-size:16.7px;line-height:19px;color:#1f1f1f;letter-spacing:0.18px;-webkit-text-stroke:0.2px #1f1f1f;">Pivot table</span>
<svg style="left:224px;top:384.4px;" width="16" height="16" viewBox="0 0 16 16"><rect x="0.9" y="0.9" width="14.2" height="14.2" rx="1.4" fill="none" stroke="#3f4245" stroke-width="1.6"/><path d="M3.4 12.2L6.3 8.6l2.1 2.5 1.5-1.8 2.6 2.9Z" fill="#3f4245"/></svg>
<span style="left:251.26px;top:383px;font-size:16.7px;line-height:19px;color:#1f1f1f;letter-spacing:0.18px;-webkit-text-stroke:0.2px #1f1f1f;">Image</span>
<svg style="left:554.4px;top:388.2px;" width="8" height="8.6" viewBox="0 0 8 8.6"><path d="M0 0L8 4.3L0 8.6Z" fill="#80868b"/></svg>
<svg style="left:224px;top:421.8px;" width="16" height="16" viewBox="0 0 16 16"><rect x="0.9" y="0.9" width="14.2" height="14.2" rx="1.4" fill="none" stroke="#3f4245" stroke-width="1.6"/><circle cx="6" cy="6" r="2.6" fill="#3f4245"/><rect x="7.8" y="7.8" width="4.8" height="4.8" fill="#3f4245"/><path d="M6 6L10 10" stroke="#3f4245" stroke-width="1.2"/></svg>
<span style="left:251.43px;top:420px;font-size:16.7px;line-height:19px;color:#1f1f1f;letter-spacing:-0.03px;-webkit-text-stroke:0.2px #1f1f1f;">Drawing</span>
<svg style="left:226.8px;top:479.8px;" width="10.8" height="14.4" viewBox="0 0 10.8 14.4"><path d="M9.7 3.6V1.1H1.4L6.1 7.2 1.4 13.3H9.7V10.8" fill="none" stroke="#3f4245" stroke-width="2.2" stroke-linejoin="miter"/></svg>
<span style="left:251.43px;top:478px;font-size:16.7px;line-height:19px;color:#1f1f1f;letter-spacing:0.18px;-webkit-text-stroke:0.2px #1f1f1f;">Function</span>
<svg style="left:554.4px;top:482.8px;" width="8" height="8.6" viewBox="0 0 8 8.6"><path d="M0 0L8 4.3L0 8.6Z" fill="#80868b"/></svg>
<svg style="left:223px;top:516.4px;" width="18" height="16" viewBox="0 0 18 16"><path d="M7.8 3.2H5.3a4.3 4.3 0 0 0 0 8.6H7.8M10.2 3.2h2.5a4.3 4.3 0 0 1 0 8.6H10.2M5.6 7.5h6.8" fill="none" stroke="#3f4245" stroke-width="1.6" transform="translate(0 .5)" stroke-width="1.6"/></svg>
<span style="left:251.43px;top:515px;font-size:16.7px;line-height:19px;color:#1f1f1f;letter-spacing:0.15px;-webkit-text-stroke:0.2px #1f1f1f;">Link</span>
<span style="left:536.99px;top:515px;font-size:16.7px;line-height:19px;color:#787d84;letter-spacing:-1.79px;font-family:'Liberation Sans','DejaVu Sans',sans-serif;-webkit-text-stroke:0.4px #787d84;">⌘K</span>
<svg style="left:224px;top:573.8px;" width="16" height="16" viewBox="0 0 16 16"><rect x="0.9" y="0.9" width="14.2" height="14.2" rx="1.4" fill="none" stroke="#3f4245" stroke-width="1.6"/><path d="M4.2 8.2l2.6 2.6 5-5.2" fill="none" stroke="#3f4245" stroke-width="1.6"/></svg>
<span style="left:251.95px;top:572px;font-size:16.7px;line-height:19px;color:#1f1f1f;letter-spacing:-0.1px;-webkit-text-stroke:0.2px #1f1f1f;">Checkbox</span>
<svg style="left:221.4px;top:611.7px;" width="20.4" height="15" viewBox="0 0 20.2 15"><rect x="0.9" y="1.4" width="18.4" height="12.2" rx="6.1" fill="none" stroke="#3f4245" stroke-width="1.6"/><path d="M10 6.6h4.6l-2.3 2.6Z" fill="#3f4245"/></svg>
<span style="left:251.43px;top:610px;font-size:16.7px;line-height:19px;color:#1f1f1f;letter-spacing:0.11px;-webkit-text-stroke:0.2px #1f1f1f;">Dropdown</span>
<svg style="left:222.6px;top:647.4px;" width="18.4" height="18.4" viewBox="0 0 18 18"><circle cx="9" cy="9" r="8" fill="none" stroke="#3f4245" stroke-width="1.6"/><circle cx="6.2" cy="6.9" r="1.15" fill="#3f4245"/><circle cx="11.8" cy="6.9" r="1.15" fill="#3f4245"/><path d="M4.9 10.2a4.3 4.3 0 0 0 8.2 0Z" fill="#3f4245"/></svg>
<span style="left:251.43px;top:647px;font-size:16.7px;line-height:19px;color:#1f1f1f;letter-spacing:0.17px;-webkit-text-stroke:0.2px #1f1f1f;">Emoji</span>
<svg style="left:221.4px;top:686.5px;" width="20.4" height="15" viewBox="0 0 20.2 15"><rect x="0.8" y="0.8" width="12.6" height="7.4" rx="3.7" fill="none" stroke="#3f4245" stroke-width="1.6"/><rect x="6.6" y="6.4" width="13.2" height="7.4" rx="3.7" fill="#fff" stroke="#3f4245" stroke-width="1.5"/><circle cx="4.4" cy="4.4" r="1.3" fill="#3f4245"/><path d="M14.2 9.6h2.8l-1.4 1.6Z" fill="#3f4245"/></svg>
<span style="left:251.64px;top:685px;font-size:16.7px;line-height:19px;color:#1f1f1f;letter-spacing:0.14px;-webkit-text-stroke:0.2px #1f1f1f;">Smart chips</span>
<svg style="left:554.4px;top:689.8px;" width="8" height="8.6" viewBox="0 0 8 8.6"><path d="M0 0L8 4.3L0 8.6Z" fill="#80868b"/></svg>
<svg style="left:223.2px;top:742.8px;" width="17.4" height="17.4" viewBox="0 0 17.2 17.2"><path d="M1 1.2H16.2V12.6H5L1 16.2Z" fill="none" stroke="#3f4245" stroke-width="1.6" stroke-linejoin="round"/><path d="M8.6 3.8v6M5.6 6.8h6" fill="none" stroke="#3f4245" stroke-width="1.6"/></svg>
<span style="left:251.95px;top:742px;font-size:16.7px;line-height:19px;color:#1f1f1f;letter-spacing:0.12px;-webkit-text-stroke:0.2px #1f1f1f;">Comment</span>
<span style="left:463.69px;top:742px;font-size:16.7px;line-height:19px;color:#787d84;letter-spacing:0.13px;font-family:'Liberation Sans','DejaVu Sans',sans-serif;-webkit-text-stroke:0.4px #787d84;">⌘+Option+M</span>
<svg style="left:223.2px;top:780.2px;" width="17.4" height="17.4" viewBox="0 0 17.2 17.2"><path d="M1 1H15.2V11.2L11.2 15.2H1Z" fill="none" stroke="#3f4245" stroke-width="1.6" stroke-linejoin="round"/><path d="M11.2 15V11.2H15" fill="none" stroke="#3f4245" stroke-width="1.6"/><path d="M4 5.4h8M4 8.6h4.6" fill="none" stroke="#3f4245" stroke-width="1.6"/></svg>
<span style="left:251.43px;top:779px;font-size:16.7px;line-height:19px;color:#1f1f1f;letter-spacing:0.33px;-webkit-text-stroke:0.2px #1f1f1f;">Note</span>
<span style="left:500.24px;top:779px;font-size:16.7px;line-height:19px;color:#787d84;letter-spacing:0.08px;-webkit-text-stroke:0.5px #787d84;">Shift+F2</span>
<svg style="left:205px;top:594px;" width="381" height="55"><rect x="4.75" y="5.15" width="369.9" height="44.1" rx="9.75" fill="none" stroke="#ff2600" stroke-width="5.5"/></svg>
<!-- data validation panel -->
<svg style="left:1213px;top:70px;" width="380" height="972"><rect x="2" y="2.8" width="374.4" height="966.9" rx="17" fill="#fff"/></svg>
<span style="left:1233.82px;top:96px;font-size:19.3px;line-height:21px;color:#1f1f1f;letter-spacing:0.28px;-webkit-text-stroke:0.35px #1f1f1f;">Data validation rules</span>
<svg style="left:1550.4px;top:100.6px;" width="12.6" height="12.6" viewBox="0 0 12.6 12.6"><path d="M1.2 1.2l10.2 10.2M11.4 1.2L1.2 11.4" stroke="#303134" stroke-width="1.6"/></svg>
<svg style="left:1215px;top:137px;" width="375" height="4" viewBox="0 0 375 4"><path d="M0 1.9H374.4" stroke="#dfe0e4" stroke-width="1.4"/></svg>
<span style="left:1233.97px;top:159px;font-size:16.7px;line-height:19px;color:#1f1f1f;letter-spacing:0.38px;-webkit-text-stroke:0.2px #1f1f1f;">Apply to range</span>
<svg style="left:1232px;top:186px;" width="341" height="47"><rect x="2.55" y="2.75" width="334.7" height="40.1" rx="4.45" fill="none" stroke="#d5d8dc" stroke-width="1.1"/></svg>
<span style="left:1245.39px;top:199px;font-size:16.7px;line-height:19px;color:#1f1f1f;transform-origin:0 0;transform:scaleX(0.9376);-webkit-text-stroke:0.2px #1f1f1f;">Sheet1!E12:E27</span>
<svg style="left:1538.4px;top:200.8px;" width="18.6" height="15.6" viewBox="0 0 18.6 15.6"><rect x="1" y="1" width="16.6" height="13.6" fill="none" stroke="#80868b" stroke-width="1.9"/><path d="M9.3 1V14.6M1 7.8H17.6" stroke="#80868b" stroke-width="1.9"/></svg>
<span style="left:1234.05px;top:259px;font-size:16.7px;line-height:19px;color:#1f1f1f;letter-spacing:0.43px;-webkit-text-stroke:0.2px #1f1f1f;">Criteria</span>
<svg style="left:1232px;top:286px;" width="318" height="47"><rect x="2.75" y="2.85" width="311.5" height="40.4" rx="4.45" fill="none" stroke="#d5d8dc" stroke-width="1.1"/></svg>
<span style="left:1244.43px;top:298px;font-size:16.7px;line-height:19px;color:#1f1f1f;-webkit-text-stroke:0.2px #1f1f1f;">Dropdown</span>
<svg style="left:1522.2px;top:305.2px;" width="9.6" height="4.8" viewBox="0 0 9.6 4.8"><path d="M0 0H9.6L4.8 4.8Z" fill="#444746"/></svg>
<svg style="left:1232.2px;top:368.2px;" width="12.2" height="21.2" viewBox="0 0 12.2 21.2"><circle cx="2.6" cy="1.7" r="2.25" fill="#80868b"/><circle cx="2.6" cy="8.6" r="2.25" fill="#80868b"/><circle cx="2.6" cy="15.5" r="2.25" fill="#80868b"/><circle cx="9.6" cy="1.7" r="2.25" fill="#80868b"/><circle cx="9.6" cy="8.6" r="2.25" fill="#80868b"/><circle cx="9.6" cy="15.5" r="2.25" fill="#80868b"/></svg>
<svg style="left:1248px;top:356px;" width="68" height="47"><rect x="2.95" y="2.75" width="61.1" height="40.4" rx="4.45" fill="none" stroke="#d5d8dc" stroke-width="1.1"/></svg>
<svg style="left:1258px;top:364px;" width="31" height="31"><rect x="3.2" y="2.4" width="24.2" height="24.2" rx="12.1" fill="#ffc8aa" stroke="rgba(0,0,0,.07)" stroke-width="0.8"/></svg>
<svg style="left:1296.8px;top:376.1px;" width="9.2" height="4.8" viewBox="0 0 9.2 4.8"><path d="M0 0H9.2L4.6 4.8Z" fill="#444746"/></svg>
<svg style="left:1323px;top:356px;" width="177" height="47"><rect x="2.95" y="2.75" width="170.1" height="40.4" rx="4.45" fill="none" stroke="#d5d8dc" stroke-width="1.1"/></svg>
<span style="left:1335.23px;top:370px;font-size:16.7px;line-height:19px;color:#1f1f1f;-webkit-text-stroke:0.2px #1f1f1f;">Marketing</span>
<svg style="left:1510.4px;top:368.4px;" width="19.2" height="21.6" viewBox="0 0 19.2 21.6"><path d="M0.3 3.3H18.9M6.5 3.1V1h6.2v2.1" fill="none" stroke="#5f6368" stroke-width="1.8"/><path d="M2.5 3.5V18.6a1.7 1.7 0 0 0 1.7 1.7h10.8a1.7 1.7 0 0 0 1.7-1.7V3.5" fill="none" stroke="#5f6368" stroke-width="1.8"/><path d="M7.5 6.9V16.6M11.7 6.9V16.6" stroke="#5f6368" stroke-width="1.7"/></svg>
<svg style="left:1232.2px;top:428.94px;" width="12.2" height="21.2" viewBox="0 0 12.2 21.2"><circle cx="2.6" cy="1.7" r="2.25" fill="#80868b"/><circle cx="2.6" cy="8.6" r="2.25" fill="#80868b"/><circle cx="2.6" cy="15.5" r="2.25" fill="#80868b"/><circle cx="9.6" cy="1.7" r="2.25" fill="#80868b"/><circle cx="9.6" cy="8.6" r="2.25" fill="#80868b"/><circle cx="9.6" cy="15.5" r="2.25" fill="#80868b"/></svg>
<svg style="left:1248px;top:416px;" width="68" height="47"><rect x="2.95" y="3.49" width="61.1" height="40.4" rx="4.45" fill="none" stroke="#d5d8dc" stroke-width="1.1"/></svg>
<svg style="left:1258px;top:424px;" width="31" height="31"><rect x="3.2" y="3.14" width="24.2" height="24.2" rx="12.1" fill="#d4edbc" stroke="rgba(0,0,0,.07)" stroke-width="0.8"/></svg>
<svg style="left:1296.8px;top:436.84px;" width="9.2" height="4.8" viewBox="0 0 9.2 4.8"><path d="M0 0H9.2L4.6 4.8Z" fill="#444746"/></svg>
<svg style="left:1323px;top:416px;" width="177" height="47"><rect x="2.95" y="3.49" width="170.1" height="40.4" rx="4.45" fill="none" stroke="#d5d8dc" stroke-width="1.1"/></svg>
<span style="left:1335.89px;top:430px;font-size:16.7px;line-height:19px;color:#1f1f1f;transform-origin:0 0;transform:scaleX(0.9341);-webkit-text-stroke:0.2px #1f1f1f;">Sales</span>
<svg style="left:1510.4px;top:429.14px;" width="19.2" height="21.6" viewBox="0 0 19.2 21.6"><path d="M0.3 3.3H18.9M6.5 3.1V1h6.2v2.1" fill="none" stroke="#5f6368" stroke-width="1.8"/><path d="M2.5 3.5V18.6a1.7 1.7 0 0 0 1.7 1.7h10.8a1.7 1.7 0 0 0 1.7-1.7V3.5" fill="none" stroke="#5f6368" stroke-width="1.8"/><path d="M7.5 6.9V16.6M11.7 6.9V16.6" stroke="#5f6368" stroke-width="1.7"/></svg>
<svg style="left:1232.2px;top:489.68px;" width="12.2" height="21.2" viewBox="0 0 12.2 21.2"><circle cx="2.6" cy="1.7" r="2.25" fill="#80868b"/><circle cx="2.6" cy="8.6" r="2.25" fill="#80868b"/><circle cx="2.6" cy="15.5" r="2.25" fill="#80868b"/><circle cx="9.6" cy="1.7" r="2.25" fill="#80868b"/><circle cx="9.6" cy="8.6" r="2.25" fill="#80868b"/><circle cx="9.6" cy="15.5" r="2.25" fill="#80868b"/></svg>
<svg style="left:1248px;top:477px;" width="68" height="47"><rect x="2.95" y="3.23" width="61.1" height="40.4" rx="4.45" fill="none" stroke="#d5d8dc" stroke-width="1.1"/></svg>
<svg style="left:1258px;top:485px;" width="31" height="31"><rect x="3.2" y="2.88" width="24.2" height="24.2" rx="12.1" fill="#ffe5a0" stroke="rgba(0,0,0,.07)" stroke-width="0.8"/></svg>
<svg style="left:1296.8px;top:497.58px;" width="9.2" height="4.8" viewBox="0 0 9.2 4.8"><path d="M0 0H9.2L4.6 4.8Z" fill="#444746"/></svg>
<svg style="left:1323px;top:477px;" width="177" height="47"><rect x="2.95" y="3.23" width="170.1" height="40.4" rx="4.45" fill="none" stroke="#d5d8dc" stroke-width="1.1"/></svg>
<span style="left:1335.37px;top:491px;font-size:16.7px;line-height:19px;color:#1f1f1f;letter-spacing:0.06px;-webkit-text-stroke:0.2px #1f1f1f;">Admin</span>
<svg style="left:1510.4px;top:489.88px;" width="19.2" height="21.6" viewBox="0 0 19.2 21.6"><path d="M0.3 3.3H18.9M6.5 3.1V1h6.2v2.1" fill="none" stroke="#5f6368" stroke-width="1.8"/><path d="M2.5 3.5V18.6a1.7 1.7 0 0 0 1.7 1.7h10.8a1.7 1.7 0 0 0 1.7-1.7V3.5" fill="none" stroke="#5f6368" stroke-width="1.8"/><path d="M7.5 6.9V16.6M11.7 6.9V16.6" stroke="#5f6368" stroke-width="1.7"/></svg>
<svg style="left:1232.2px;top:550.42px;" width="12.2" height="21.2" viewBox="0 0 12.2 21.2"><circle cx="2.6" cy="1.7" r="2.25" fill="#80868b"/><circle cx="2.6" cy="8.6" r="2.25" fill="#80868b"/><circle cx="2.6" cy="15.5" r="2.25" fill="#80868b"/><circle cx="9.6" cy="1.7" r="2.25" fill="#80868b"/><circle cx="9.6" cy="8.6" r="2.25" fill="#80868b"/><circle cx="9.6" cy="15.5" r="2.25" fill="#80868b"/></svg>
<svg style="left:1248px;top:538px;" width="68" height="47"><rect x="2.95" y="2.97" width="61.1" height="40.4" rx="4.45" fill="none" stroke="#d5d8dc" stroke-width="1.1"/></svg>
<svg style="left:1258px;top:546px;" width="31" height="31"><rect x="3.2" y="2.62" width="24.2" height="24.2" rx="12.1" fill="#bfe1f6" stroke="rgba(0,0,0,.07)" stroke-width="0.8"/></svg>
<svg style="left:1296.8px;top:558.32px;" width="9.2" height="4.8" viewBox="0 0 9.2 4.8"><path d="M0 0H9.2L4.6 4.8Z" fill="#444746"/></svg>
<svg style="left:1323px;top:538px;" width="177" height="47"><rect x="2.95" y="2.97" width="170.1" height="40.4" rx="4.45" fill="none" stroke="#d5d8dc" stroke-width="1.1"/></svg>
<span style="left:1335.78px;top:552px;font-size:16.7px;line-height:19px;color:#1f1f1f;transform-origin:0 0;transform:scaleX(0.9660);-webkit-text-stroke:0.2px #1f1f1f;">Finance</span>
<svg style="left:1510.4px;top:550.62px;" width="19.2" height="21.6" viewBox="0 0 19.2 21.6"><path d="M0.3 3.3H18.9M6.5 3.1V1h6.2v2.1" fill="none" stroke="#5f6368" stroke-width="1.8"/><path d="M2.5 3.5V18.6a1.7 1.7 0 0 0 1.7 1.7h10.8a1.7 1.7 0 0 0 1.7-1.7V3.5" fill="none" stroke="#5f6368" stroke-width="1.8"/><path d="M7.5 6.9V16.6M11.7 6.9V16.6" stroke="#5f6368" stroke-width="1.7"/></svg>
<svg style="left:1232.2px;top:611.16px;" width="12.2" height="21.2" viewBox="0 0 12.2 21.2"><circle cx="2.6" cy="1.7" r="2.25" fill="#80868b"/><circle cx="2.6" cy="8.6" r="2.25" fill="#80868b"/><circle cx="2.6" cy="15.5" r="2.25" fill="#80868b"/><circle cx="9.6" cy="1.7" r="2.25" fill="#80868b"/><circle cx="9.6" cy="8.6" r="2.25" fill="#80868b"/><circle cx="9.6" cy="15.5" r="2.25" fill="#80868b"/></svg>
<svg style="left:1248px;top:599px;" width="68" height="47"><rect x="2.95" y="2.71" width="61.1" height="40.4" rx="4.45" fill="none" stroke="#d5d8dc" stroke-width="1.1"/></svg>
<svg style="left:1258px;top:606px;" width="31" height="31"><rect x="3.2" y="3.36" width="24.2" height="24.2" rx="12.1" fill="#c6dbe1" stroke="rgba(0,0,0,.07)" stroke-width="0.8"/></svg>
<svg style="left:1296.8px;top:619.06px;" width="9.2" height="4.8" viewBox="0 0 9.2 4.8"><path d="M0 0H9.2L4.6 4.8Z" fill="#444746"/></svg>
<svg style="left:1323px;top:599px;" width="177" height="47"><rect x="2.95" y="2.71" width="170.1" height="40.4" rx="4.45" fill="none" stroke="#d5d8dc" stroke-width="1.1"/></svg>
<span style="left:1335.23px;top:613px;font-size:16.7px;line-height:19px;color:#1f1f1f;letter-spacing:0.03px;-webkit-text-stroke:0.2px #1f1f1f;">Production</span>
<svg style="left:1510.4px;top:611.36px;" width="19.2" height="21.6" viewBox="0 0 19.2 21.6"><path d="M0.3 3.3H18.9M6.5 3.1V1h6.2v2.1" fill="none" stroke="#5f6368" stroke-width="1.8"/><path d="M2.5 3.5V18.6a1.7 1.7 0 0 0 1.7 1.7h10.8a1.7 1.7 0 0 0 1.7-1.7V3.5" fill="none" stroke="#5f6368" stroke-width="1.8"/><path d="M7.5 6.9V16.6M11.7 6.9V16.6" stroke="#5f6368" stroke-width="1.7"/></svg>
<svg style="left:1232.2px;top:671.9px;" width="12.2" height="21.2" viewBox="0 0 12.2 21.2"><circle cx="2.6" cy="1.7" r="2.25" fill="#80868b"/><circle cx="2.6" cy="8.6" r="2.25" fill="#80868b"/><circle cx="2.6" cy="15.5" r="2.25" fill="#80868b"/><circle cx="9.6" cy="1.7" r="2.25" fill="#80868b"/><circle cx="9.6" cy="8.6" r="2.25" fill="#80868b"/><circle cx="9.6" cy="15.5" r="2.25" fill="#80868b"/></svg>
<svg style="left:1248px;top:659px;" width="68" height="47"><rect x="2.95" y="3.45" width="61.1" height="40.4" rx="4.45" fill="none" stroke="#d5d8dc" stroke-width="1.1"/></svg>
<svg style="left:1258px;top:667px;" width="31" height="31"><rect x="3.2" y="3.1" width="24.2" height="24.2" rx="12.1" fill="#e6cff2" stroke="rgba(0,0,0,.07)" stroke-width="0.8"/></svg>
<svg style="left:1296.8px;top:679.8px;" width="9.2" height="4.8" viewBox="0 0 9.2 4.8"><path d="M0 0H9.2L4.6 4.8Z" fill="#444746"/></svg>
<svg style="left:1323px;top:659px;" width="177" height="47"><rect x="2.95" y="3.45" width="170.1" height="40.4" rx="4.45" fill="none" stroke="#d5d8dc" stroke-width="1.1"/></svg>
<span style="left:1335.77px;top:673px;font-size:16.7px;line-height:19px;color:#1f1f1f;transform-origin:0 0;transform:scaleX(0.9704);-webkit-text-stroke:0.2px #1f1f1f;">Field</span>
<svg style="left:1510.4px;top:672.1px;" width="19.2" height="21.6" viewBox="0 0 19.2 21.6"><path d="M0.3 3.3H18.9M6.5 3.1V1h6.2v2.1" fill="none" stroke="#5f6368" stroke-width="1.8"/><path d="M2.5 3.5V18.6a1.7 1.7 0 0 0 1.7 1.7h10.8a1.7 1.7 0 0 0 1.7-1.7V3.5" fill="none" stroke="#5f6368" stroke-width="1.8"/><path d="M7.5 6.9V16.6M11.7 6.9V16.6" stroke="#5f6368" stroke-width="1.7"/></svg>
<svg style="left:1231px;top:711px;" width="202" height="46"><rect x="3.35" y="3.15" width="195.5" height="39.5" rx="4.45" fill="none" stroke="#d5d8dc" stroke-width="1.1"/></svg>
<span style="left:1263.97px;top:725px;font-size:16.7px;line-height:19px;color:#178038;letter-spacing:0.65px;-webkit-text-stroke:0.5px #178038;">Add another item</span>
<div style="left:1235.2px;top:779.8px;width:20.8px;height:20.8px;border:2px solid #5f6368;border-radius:3px;box-sizing:border-box;"></div>
<span style="left:1271.47px;top:782px;font-size:16.4px;line-height:18px;color:#1f1f1f;letter-spacing:0.11px;-webkit-text-stroke:0.2px #1f1f1f;">Allow multiple selections</span>
<span style="left:1263.87px;top:846px;font-size:16.7px;line-height:19px;color:#178038;letter-spacing:0.65px;-webkit-text-stroke:0.5px #178038;">Advanced options</span>
<svg style="left:1215px;top:958px;" width="352" height="4" viewBox="0 0 352 4"><path d="M0 1.9H351" stroke="#dfe0e4" stroke-width="1.4"/></svg>
<svg style="left:1265px;top:977px;" width="162" height="47"><rect x="2.95" y="2.95" width="154.9" height="40.1" rx="4.45" fill="none" stroke="#d5d8dc" stroke-width="1.1"/></svg>
<span style="left:1296.23px;top:991px;font-size:16.7px;line-height:19px;color:#178038;letter-spacing:0.33px;-webkit-text-stroke:0.5px #178038;">Remove rule</span>
<svg style="left:1445px;top:977px;" width="105" height="47"><rect x="2.2" y="2.4" width="99.6" height="41.2" rx="5" fill="#188038"/></svg>
<span style="left:1476.23px;top:991px;font-size:16.7px;line-height:19px;color:#fff;letter-spacing:0.35px;-webkit-text-stroke:0.5px #fff;">Done</span>
<svg style="left:1200px;top:245px;" width="381" height="654"><rect x="5.25" y="5.25" width="369.6" height="642.8" rx="10.75" fill="none" stroke="#ff2600" stroke-width="5.5"/></svg>
</div>
</body>
</html>
